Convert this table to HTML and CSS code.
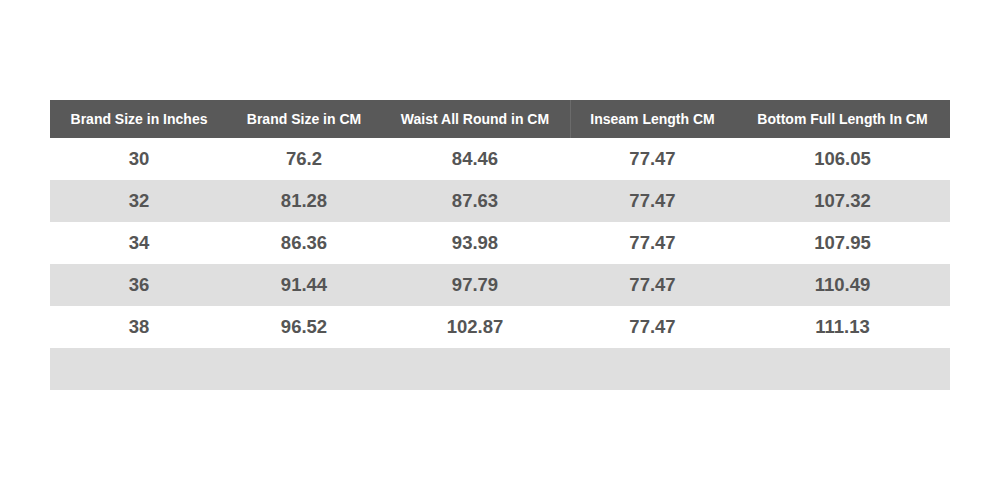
FILE: index.html
```html
<!DOCTYPE html>
<html>
<head>
<meta charset="utf-8">
<link rel="stylesheet" href="styles.css">
</head>
<body>
<div class="page">
  <table class="size-table">
    <colgroup>
      <col class="c1"><col class="c2"><col class="c3"><col class="c4"><col class="c5">
    </colgroup>
    <thead>
      <tr>
        <th>Brand Size in Inches</th>
        <th>Brand Size in CM</th>
        <th>Waist All Round in CM</th>
        <th class="divider">Inseam Length CM</th>
        <th>Bottom Full Length In CM</th>
      </tr>
    </thead>
    <tbody>
      <tr><td>30</td><td>76.2</td><td>84.46</td><td>77.47</td><td>106.05</td></tr>
      <tr><td>32</td><td>81.28</td><td>87.63</td><td>77.47</td><td>107.32</td></tr>
      <tr><td>34</td><td>86.36</td><td>93.98</td><td>77.47</td><td>107.95</td></tr>
      <tr><td>36</td><td>91.44</td><td>97.79</td><td>77.47</td><td>110.49</td></tr>
      <tr><td>38</td><td>96.52</td><td>102.87</td><td>77.47</td><td>111.13</td></tr>
      <tr><td></td><td></td><td></td><td></td><td></td></tr>
    </tbody>
  </table>
</div>
</body>
</html>
```
FILE: styles.css
```css
html, body {
  margin: 0;
  padding: 0;
  background: #ffffff;
}
.page {
  padding: 100px 50px 0 50px;
  font-family: "Liberation Sans", Arial, sans-serif;
}
.size-table {
  width: 900px;
  border-collapse: collapse;
  table-layout: fixed;
}
.c1 { width: 178px; }
.c2 { width: 152px; }
.c3 { width: 190px; }
.c4 { width: 165px; }
.c5 { width: 215px; }
.size-table th {
  background: #595959;
  color: #ffffff;
  font-size: 14px;
  font-weight: bold;
  height: 38px;
  padding: 0;
  text-align: center;
  vertical-align: middle;
}
.size-table th.divider {
  box-shadow: inset 1px 0 0 #6b6b6b;
}
.size-table td {
  height: 42px;
  padding: 0;
  text-align: center;
  vertical-align: middle;
  font-size: 18.5px;
  font-weight: bold;
  color: #555555;
}
.size-table tbody tr:nth-child(even) td {
  background: #dfdfdf;
}
```
